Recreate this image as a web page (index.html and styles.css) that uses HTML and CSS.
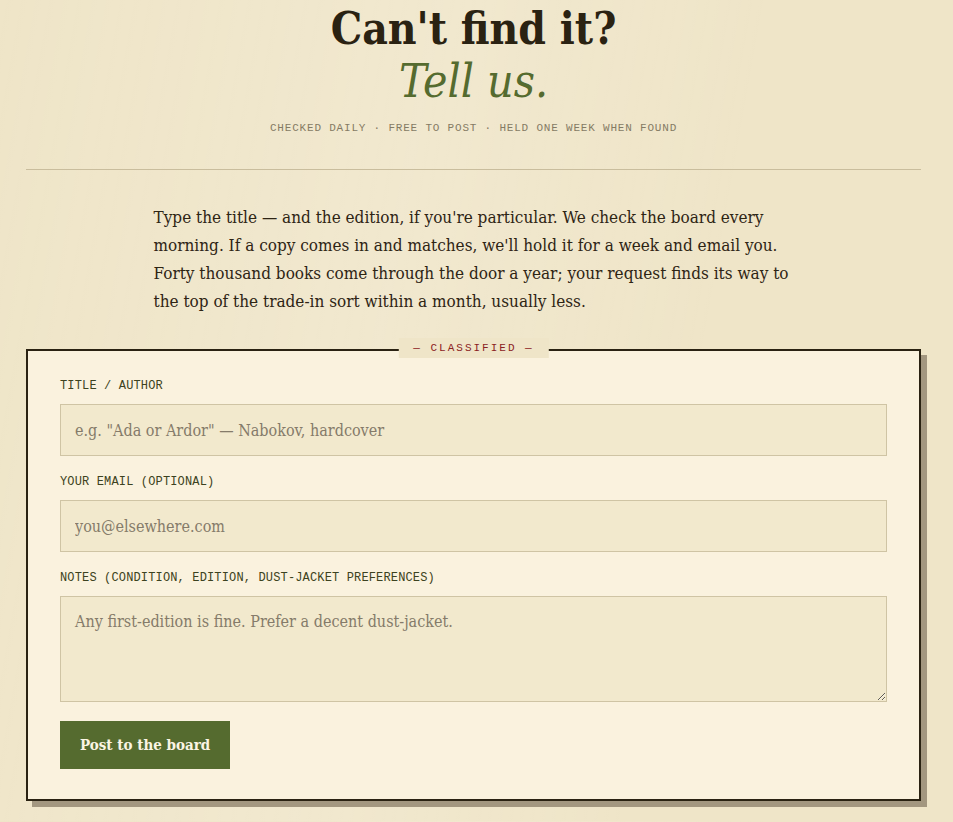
FILE: index.html
```html
<!DOCTYPE html>
<html lang="en">
<head>
  <meta charset="UTF-8" />
  <meta name="viewport" content="width=device-width, initial-scale=1.0" />
  <title>Can't find it? Tell us.</title>
  <link rel="stylesheet" href="styles.css">
</head>
<body>
  <main class="page">
    <!-- HEADER -->
    <header class="masthead">
      <h1>Can't find it?<br><em>Tell us.</em></h1>
      <p class="kicker">Checked daily · Free to post · Held one week when found</p>
    </header>

    <hr class="rule" />

    <p class="lede">Type the title — and the edition, if you're particular. We check the board every morning. If a copy comes in and matches, we'll hold it for a week and email you. Forty thousand books come through the door a year; your request finds its way to the top of the trade-in sort within a month, usually less.</p>

    <!-- REQUEST FORM -->
    <form class="classified">
      <span class="tag">— Classified —</span>

      <div class="field">
        <label for="title">Title / Author</label>
        <input id="title" type="text" placeholder='e.g. "Ada or Ardor" — Nabokov, hardcover' />
      </div>

      <div class="field">
        <label for="email">Your email (optional)</label>
        <input id="email" type="email" placeholder="you@elsewhere.com" />
      </div>

      <div class="field">
        <label for="notes">Notes (condition, edition, dust-jacket preferences)</label>
        <textarea id="notes" placeholder="Any first-edition is fine. Prefer a decent dust-jacket."></textarea>
      </div>

      <button type="submit" class="post">Post to the board</button>
    </form>
  </main>
</body>
</html>
```

FILE: styles.css
```css
:root {
  --bg: #efe5c8;
  --paper: #faf2de;
  --field: #f2e9cd;
  --ink: #2a2212;
  --olive: #556b2f;
  --rule: #c9bd9d;
  --red: #8b2222;
  --text: 'DejaVu Serif Condensed', 'DejaVu Serif', serif;
  --mono: 'Liberation Mono', 'Courier New', monospace;
}
/* RESET & BASE */
* { margin:0; padding:0; box-sizing:border-box; }
body {
  background: var(--bg);
  background-image: linear-gradient(100deg, rgba(255,255,255,0) 0%, rgba(255,255,255,0.12) 40%, rgba(255,255,255,0) 70%);
  color: var(--ink); font-family: var(--text);
}
.page { padding: 2px 32px 20px 26px; }

/* HEADER */
.masthead { text-align:center; }
h1 { font-size:44px; line-height:53px; font-weight:700; color:var(--ink); }
h1 em { font-size:46px; font-weight:400; color:var(--olive); }
.kicker {
  margin-top:13px; font-family:var(--mono); font-size:11px; line-height:14px;
  letter-spacing:0.8px; text-transform:uppercase; color:#857b64;
}
.rule { border:0; height:1px; background:var(--rule); margin:34px 0 33px; }

/* INTRO */
.lede {
  max-width:640px; margin:0 auto;
  font-size:17px; line-height:28px; color:#2e2414;
}

/* CLASSIFIED CARD */
.classified {
  position:relative; margin-top:34px;
  background:var(--paper); border:2px solid var(--ink);
  box-shadow:6px 6px 0 #a39780;
  padding:28px 32px 30px;
}
.tag {
  position:absolute; top:-13px; left:50%; transform:translateX(-50%);
  background:var(--bg); padding:0 15px; line-height:20px;
  font-family:var(--mono); font-size:11px; letter-spacing:2px;
  text-transform:uppercase; color:var(--red); white-space:nowrap;
}
.field { margin-bottom:19px; }
label {
  display:block; margin-bottom:11px;
  font-family:var(--mono); font-size:12px; line-height:14px;
  letter-spacing:0.15px; text-transform:uppercase; color:#3c4220;
}
input, textarea {
  display:block; width:100%;
  background:var(--field); border:1px solid #cfc4a4; border-radius:0;
  font-family:var(--text); font-size:16px; color:var(--ink);
  padding:0 14px; outline:none;
}
input { height:52px; }
textarea { height:106px; padding-top:15px; resize:vertical; }
::placeholder { color:#857b6a; }

.post {
  height:48px; padding:0 20px;
  background:var(--olive); color:#fbf5e4; border:0;
  font-family:var(--text); font-size:15px; font-weight:700; cursor:pointer;
}
```
